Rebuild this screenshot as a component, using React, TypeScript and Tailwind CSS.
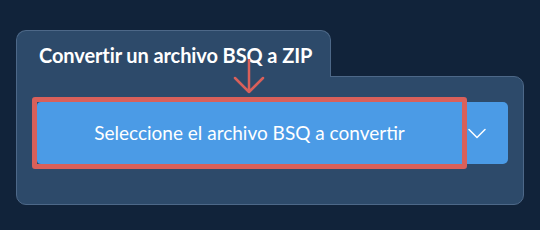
import React from 'react';

const ChevronDown: React.FC = () => (
  <svg width="18" height="11" viewBox="0 0 18 11" fill="none">
    <path d="M1 1.5l8 8 8-8" stroke="white" strokeWidth="1.5" strokeLinecap="round" strokeLinejoin="round" />
  </svg>
);

const PointerArrow: React.FC = () => (
  <svg width="32" height="36" viewBox="0 0 32 36" fill="none">
    <path d="M16 1v32M2 19l14 14 14-14" stroke="#d9605a" strokeWidth="2.5" strokeLinecap="round" strokeLinejoin="round" />
  </svg>
);

const App: React.FC = () => {
  return (
    <div className="w-[540px] h-[230px] bg-[#11233a] px-4 pt-[30px] font-['Lato',sans-serif] overflow-hidden">
      <div className="w-[315px] h-[47px] bg-[#2d4a6a] border border-b-0 border-[#4d6888] rounded-t-[10px] pl-[22px] pt-[12px] relative z-10 -mb-px">
        <h1 className="text-[20px] font-bold text-white leading-[24px] tracking-[-0.1px]">Convertir un archivo BSQ a ZIP</h1>
      </div>
      <div className="w-[508px] h-[129px] bg-[#2d4a6a] border border-[#4d6888] rounded-b-[10px] rounded-tr-[10px] pl-[20px] pr-[15px] pt-[25px]">
        <div className="flex h-[62px] gap-px">
          <div className="relative flex-1">
            <button className="w-full h-full bg-[#4b9be6] text-white text-[19px] rounded-l-[4px]">
              Seleccione el archivo BSQ a convertir
            </button>
            <div className="absolute -inset-[5px] border-[5px] border-[#d9605a] rounded-[3px] pointer-events-none" />
            <div className="absolute left-[196px] -top-[43px] z-20">
              <PointerArrow />
            </div>
          </div>
          <button className="w-[45px] h-full bg-[#4b9be6] rounded-r-[5px] flex items-center pl-[5px]">
            <ChevronDown />
          </button>
        </div>
      </div>
    </div>
  );
};

export default App;
